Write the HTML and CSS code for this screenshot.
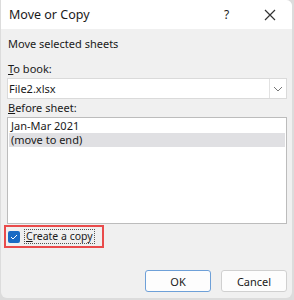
FILE: index.html
```html
<!DOCTYPE html>
<html lang="en">
<head>
    <meta charset="UTF-8">
    <title>Move or Copy</title>
    <link rel="stylesheet" href="styles.css">
</head>
<body>
    <div class="dialog">
        <header class="titlebar">
            <span class="title">Move or Copy</span>
            <span class="help">?</span>
            <svg class="close" width="12" height="12" viewBox="0 0 12 12">
                <path d="M1 1L11 11M11 1L1 11" stroke="#333" stroke-width="1.2" fill="none"/>
            </svg>
        </header>
        <main class="body">
            <p class="caption">Move selected sheets</p>
            <label class="label"><u>T</u>o book:</label>
            <div class="select">
                <span class="select-value">File2.xlsx</span>
                <span class="select-btn">
                    <svg width="10" height="6" viewBox="0 0 10 6">
                        <path d="M1 1L5 5L9 1" stroke="#777" stroke-width="1" fill="none"/>
                    </svg>
                </span>
            </div>
            <label class="label label-tight"><u>B</u>efore sheet:</label>
            <ul class="list">
                <li>Jan-Mar 2021</li>
                <li class="selected">(move to end)</li>
            </ul>
            <div class="copy-row">
                <span class="checkbox">
                    <svg width="8" height="6" viewBox="0 0 8 6">
                        <path d="M1 3L3 5L7 1" stroke="#fff" stroke-width="1" fill="none"/>
                    </svg>
                </span>
                <span class="copy-text"><u>C</u>reate a copy</span>
            </div>
            <div class="buttons">
                <button class="btn primary">OK</button>
                <button class="btn">Cancel</button>
            </div>
        </main>
    </div>
</body>
</html>
```

FILE: styles.css
```css
body {
    margin: 0;
    background: #dcdcdc;
    font-family: "Noto Sans", "Open Sans", sans-serif;
    font-size: 11px;
    color: #1a1a1a;
}
.dialog {
    width: 291px;
    height: 298px;
    margin-left: 1px;
    background: #f0f0f0;
    border-radius: 0 6px 6px 6px;
    overflow: hidden;
    display: flex;
    flex-direction: column;
}
.titlebar {
    height: 29px;
    background: #fff;
    display: flex;
    align-items: center;
    padding-left: 8px;
}
.title {
    font-size: 12.5px;
    flex: 1;
}
.help {
    font-size: 12px;
    width: 12px;
    margin-right: 28px;
}
.close {
    margin-right: 16px;
}
.body {
    flex: 1;
    display: flex;
    flex-direction: column;
    padding: 0 5px 0 6px;
}
.caption {
    margin: 7px 0 0 1px;
    line-height: 15px;
}
.label {
    margin: 10px 0 2px 1px;
    line-height: 15px;
}
.label-tight {
    margin-top: 1px;
}
.select {
    height: 19px;
    background: #fff;
    border: 1px solid #dadada;
    display: flex;
    align-items: center;
}
.select-value {
    flex: 1;
    padding-left: 1px;
}
.select-btn {
    width: 16px;
    height: 19px;
    border-left: 1px solid #e2e2e2;
    display: flex;
    align-items: center;
    justify-content: center;
}
.list {
    list-style: none;
    margin: 0;
    padding: 1px;
    height: 103px;
    background: #fff;
    border: 1px solid #bcbcbc;
}
.list li {
    line-height: 14px;
    padding-left: 2px;
}
.list .selected {
    background: #e0e0e3;
}
.copy-row {
    margin: 1px 0 0 -3px;
    width: 95px;
    height: 19px;
    border: 2px solid #e94b4b;
    display: flex;
    align-items: center;
    gap: 4px;
    padding-left: 1px;
}
.checkbox {
    width: 12px;
    height: 12px;
    margin-left: 1px;
    background: #1a6bc4;
    border-radius: 2px;
    display: flex;
    align-items: center;
    justify-content: center;
}
.copy-text {
    border: 1px dotted #555;
    padding: 0 1px;
    line-height: 13px;
    font-size: 10.5px;
}
.buttons {
    margin-top: auto;
    margin-bottom: 6px;
    display: flex;
    justify-content: flex-end;
    gap: 10px;
}
.btn {
    width: 66px;
    height: 22px;
    background: #fdfdfd;
    border: 1px solid #d0d0d0;
    border-radius: 3px;
    font-family: inherit;
    font-size: 11px;
    color: #1a1a1a;
}
.btn.primary {
    border: 1px solid #6ea0d8;
}
```
